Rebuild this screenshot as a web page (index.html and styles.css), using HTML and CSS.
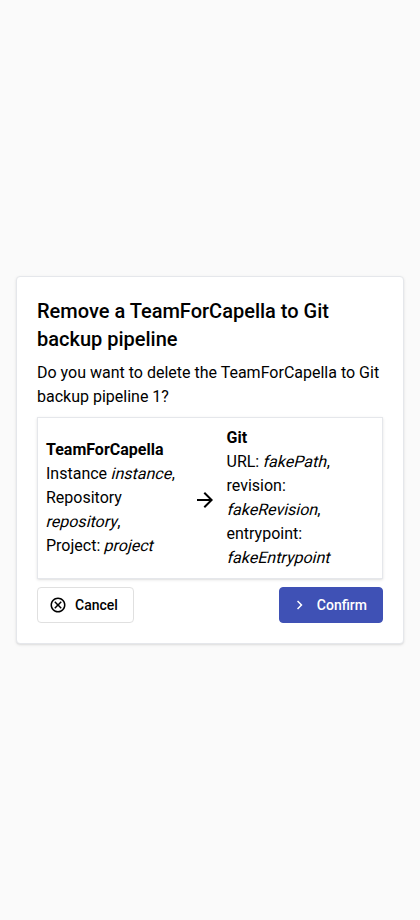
FILE: index.html
```html
<!DOCTYPE html>
<html lang="en">
<head>
<meta charset="utf-8">
<title>Remove pipeline</title>
<link rel="stylesheet" href="styles.css">
</head>
<body>
<main class="card">
  <h2 class="title">Remove a TeamForCapella to Git backup pipeline</h2>
  <p class="question">Do you want to delete the TeamForCapella to Git backup pipeline 1?</p>
  <div class="pipeline">
    <div class="source"><b>TeamForCapella</b><br>Instance <i>instance</i>,<br>Repository <i>repository</i>,<br>Project: <i>project</i></div>
    <svg class="arrow" viewBox="0 -960 960 960"><path d="M647-440H160v-80h487L423-744l57-56 320 320-320 320-57-56 224-224Z"/></svg>
    <div class="target"><b>Git</b><br>URL: <i>fakePath</i>,<br>revision: <i>fakeRevision</i>,<br>entrypoint: <i>fakeEntrypoint</i></div>
  </div>
  <div class="actions">
    <button class="btn cancel"><svg class="icon" viewBox="0 -960 960 960"><path d="m336-280 144-144 144 144 56-56-144-144 144-144-56-56-144 144-144-144-56 56 144 144-144 144 56 56ZM480-80q-83 0-156-31.500T197-197q-54-54-85.500-127T80-480q0-83 31.500-156T197-763q54-54 127-85.500T480-880q83 0 156 31.500T763-763q54 54 85.500 127T880-480q0 83-31.500 156T763-197q-54 54-127 85.500T480-80Zm0-80q134 0 227-93t93-227q0-134-93-227t-227-93q-134 0-227 93t-93 227q0 134 93 227t227 93Z"/></svg>Cancel</button>
    <button class="btn confirm"><svg class="icon" viewBox="0 -960 960 960"><path d="M504-480 320-664l56-56 240 240-240 240-56-56 184-184Z"/></svg>Confirm</button>
  </div>
</main>
</body>
</html>
```
FILE: styles.css
```css
* { box-sizing: border-box; }
body {
  margin: 0;
  min-height: 100vh;
  padding: 0 16px;
  display: flex;
  align-items: center;
  background: #fafafa;
  color: #000;
  font: 16px/24px Roboto, sans-serif;
}
.card {
  width: 100%;
  padding: 20px;
  background: #fff;
  border: 1px solid #e5e7eb;
  border-radius: 4px;
  box-shadow: 0 1px 3px rgba(0, 0, 0, .1), 0 1px 2px -1px rgba(0, 0, 0, .1);
}
.title { margin: 0 0 8px; font-size: 20px; line-height: 28px; font-weight: 500; }
.question { margin: 0; }
.pipeline {
  display: flex;
  align-items: center;
  margin: 8px 0;
  padding: 8px;
  border: 1px solid #e5e7eb;
  box-shadow: 0 1px 3px rgba(0, 0, 0, .1), 0 1px 2px -1px rgba(0, 0, 0, .1);
}
.source { width: 139.5px; }
.target { width: 147.5px; }
/* slanted upright face */
.pipeline i {
  display: inline-block;
  font-style: normal;
  transform: skewX(-14deg);
  transform-origin: 0 15px;
}
.arrow { width: 24px; height: 24px; flex: none; margin: 4px 9.5px 0 7.5px; }
.actions { display: flex; justify-content: space-between; }
.btn {
  display: flex;
  align-items: center;
  height: 36px;
  padding: 0 15px 0 11px;
  border: 1px solid #e0e0e0;
  border-radius: 4px;
  background: #fff;
  color: #000;
  font: 500 14px/20px Roboto, sans-serif;
}
.icon { width: 18px; height: 18px; margin-right: 8px; fill: currentColor; }
.confirm { background: #3f51b5; border-color: #3f51b5; color: #fff; }
```
